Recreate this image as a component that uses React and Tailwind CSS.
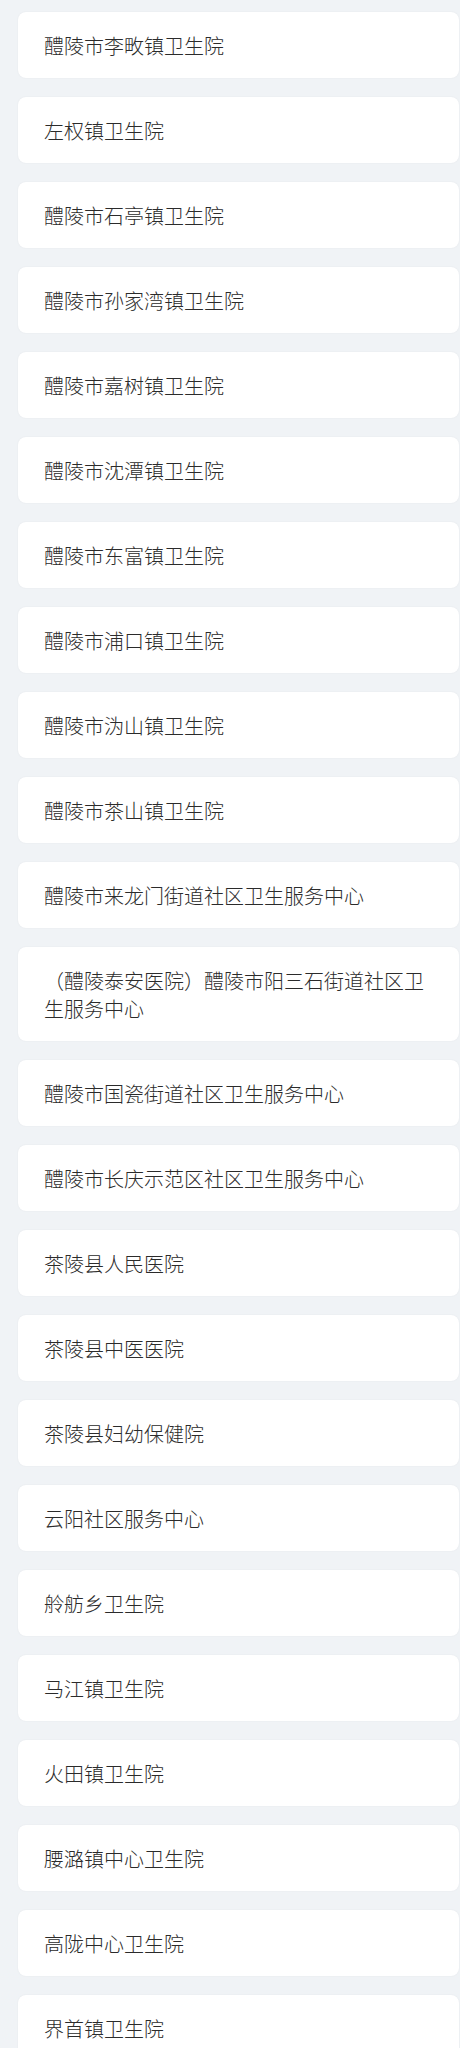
import React from "react";

const items = [
  "醴陵市李畋镇卫生院",
  "左权镇卫生院",
  "醴陵市石亭镇卫生院",
  "醴陵市孙家湾镇卫生院",
  "醴陵市嘉树镇卫生院",
  "醴陵市沈潭镇卫生院",
  "醴陵市东富镇卫生院",
  "醴陵市浦口镇卫生院",
  "醴陵市沩山镇卫生院",
  "醴陵市茶山镇卫生院",
  "醴陵市来龙门街道社区卫生服务中心",
  "（醴陵泰安医院）醴陵市阳三石街道社区卫生服务中心",
  "醴陵市国瓷街道社区卫生服务中心",
  "醴陵市长庆示范区社区卫生服务中心",
  "茶陵县人民医院",
  "茶陵县中医医院",
  "茶陵县妇幼保健院",
  "云阳社区服务中心",
  "舲舫乡卫生院",
  "马江镇卫生院",
  "火田镇卫生院",
  "腰潞镇中心卫生院",
  "高陇中心卫生院",
  "界首镇卫生院",
];

export default function App() {
  return (
    <div
      className="min-h-[2048px] bg-[#f0f3f6] pt-[12px] pl-[18px] pr-[1px] flex flex-col gap-[19px]"
      style={{ fontFamily: '"Noto Sans CJK SC", "Noto Sans", sans-serif' }}
    >
      {items.map((t) => (
        <div
          key={t}
          className="bg-white rounded-[8px] shadow-[0_0_2px_rgba(0,0,0,0.06)] pl-[26px] pr-[26px] pt-[20px] pb-[18px] text-[20px] leading-[28px] font-light text-[#2b2b2b]"
        >
          {t}
        </div>
      ))}
    </div>
  );
}
